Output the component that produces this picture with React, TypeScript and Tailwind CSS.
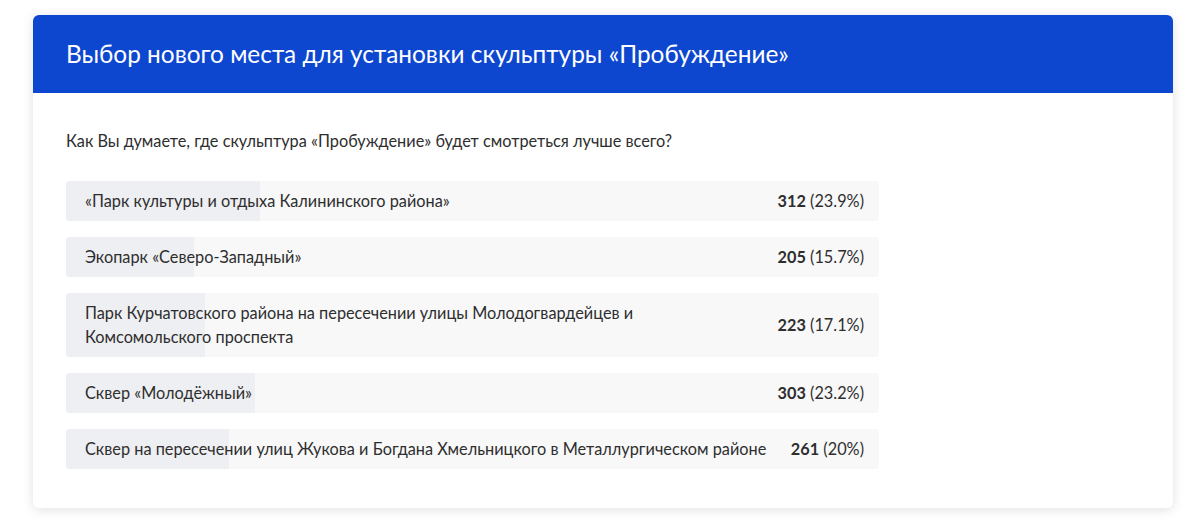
const options = [
  { label: "«Парк культуры и отдыха Калининского района»", votes: 312, pct: "23.9%", value: 23.9 },
  { label: "Экопарк «Северо-Западный»", votes: 205, pct: "15.7%", value: 15.7 },
  {
    label: "Парк Курчатовского района на пересечении улицы Молодогвардейцев и Комсомольского проспекта",
    votes: 223,
    pct: "17.1%",
    value: 17.1,
  },
  { label: "Сквер «Молодёжный»", votes: 303, pct: "23.2%", value: 23.2 },
  {
    label: "Сквер на пересечении улиц Жукова и Богдана Хмельницкого в Металлургическом районе",
    votes: 261,
    pct: "20%",
    value: 20,
  },
];

export default function App() {
  return (
    <div className="min-h-[527px] bg-white pt-[15px] px-[33px] font-['Lato','Open_Sans',sans-serif]">
      <div className="w-[1140px] rounded-[6px] bg-white shadow-[0_2px_12px_rgba(0,0,0,0.12)]">
        <div className="h-[78px] rounded-t-[6px] bg-[#0d47d0] px-[33px] flex items-center">
          <h1 className="text-[24.4px] text-white font-normal">
            Выбор нового места для установки скульптуры «Пробуждение»
          </h1>
        </div>
        <div className="px-[33px] pt-[36px] pb-[39px]">
          <p className="text-[16.3px] leading-6 text-[#2e2e2e]">
            Как Вы думаете, где скульптура «Пробуждение» будет смотреться лучше всего?
          </p>
          <div className="mt-[28px] w-[813px] flex flex-col gap-[16px]">
            {options.map((o) => (
              <div key={o.label} className="relative rounded-[4px] bg-[#f8f8f9] overflow-hidden">
                <div
                  className="absolute left-0 top-0 bottom-0 bg-[#eeeff2]"
                  style={{ width: `${o.value}%` }}
                />
                <div className="relative flex items-center justify-between gap-[22px] pl-[19px] pr-[15px] py-[8px] min-h-[40px]">
                  <span className="flex-1 text-[16.3px] leading-6 text-[#2e2e2e]">{o.label}</span>
                  <span className="text-[16.3px] leading-6 text-[#2e2e2e] whitespace-nowrap">
                    <b className="font-bold">{o.votes}</b> ({o.pct})
                  </span>
                </div>
              </div>
            ))}
          </div>
        </div>
      </div>
    </div>
  );
}
